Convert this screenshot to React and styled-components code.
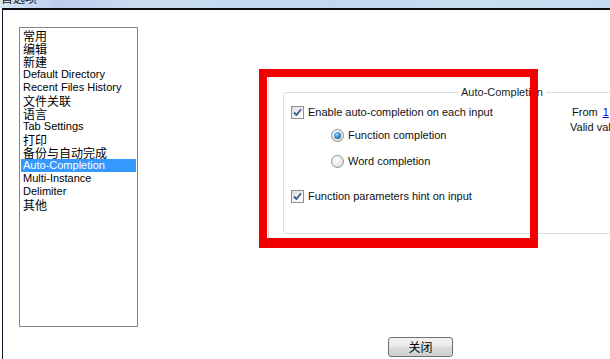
import React from 'react'
import { styled, createGlobalStyle } from 'styled-components'

const GlobalStyle = createGlobalStyle`
    html, body {
        margin: 0;
        padding: 0;
        background: #ffffff;
    }
    body {
        font-family: "Liberation Sans", "Noto Sans CJK SC", sans-serif;
        font-size: 11px;
        color: #000;
    }
`

const Page = styled.div`
    width: 610px;
    height: 359px;
    overflow: hidden;
    display: flex;
    flex-direction: column;
    background: #ffffff;
`

const TitleBar = styled.div`
    height: 8px;
    flex: none;
    overflow: hidden;
    background: linear-gradient(90deg, #d6e5f4 0%, #bccdee 10%, #c8dbf1 22%, #c2d8ef 55%, #c9ddf2 80%, #c4daf0 100%);
`

const TitleText = styled.div`
    margin-top: -9px;
    padding-left: 1px;
    font-family: "Noto Sans CJK SC", sans-serif;
    font-size: 12px;
    line-height: 14px;
    color: #1a1a1a;
`

const Dialog = styled.div`
    position: relative;
    flex: 1;
    margin-left: 2px;
    border-top: 2px solid #0b0b12;
    border-left: 1px solid #10182a;
    background: #ffffff;
    display: flex;
    flex-direction: column;
`

const MainRow = styled.div`
    display: flex;
    align-items: flex-start;
    padding: 17px 0 0 16px;
`

const ListBox = styled.div`
    box-sizing: border-box;
    flex: none;
    width: 119px;
    height: 300px;
    border: 1px solid #848484;
    padding: 1px 1px;
    background: #fff;
`

const ListItem = styled.div`
    height: 13px;
    line-height: 13px;
    padding-left: 2px;
    white-space: nowrap;
    font-family: ${p => p.$cjk ? '"Noto Sans CJK SC", sans-serif' : '"Liberation Sans", sans-serif'};
    font-size: ${p => p.$cjk ? '12px' : '11px'};
    background: ${p => p.$selected ? '#3399ff' : 'transparent'};
    color: ${p => p.$selected ? '#ffffff' : '#000000'};
`

const Pane = styled.div`
    flex: 1;
    min-width: 0;
    height: 163px;
    margin: 50px 0 0 130px;
    padding: 9px 0 0 14px;
    border-left: 1px solid #d6d6d6;
    box-sizing: border-box;
`

const GroupBox = styled.fieldset`
    width: 420px;
    margin: 0;
    padding: 0 0 30px 0;
    border: 1px solid #d5dfe5;
    border-radius: 3px;
    min-width: 0;
`

const Legend = styled.legend`
    margin-left: 174px;
    padding: 0 3px;
    font-size: 11px;
    line-height: 13px;
    color: #1e1e1e;
`

const GroupContent = styled.div`
    display: flex;
    padding: 7px 0 0 7px;
`

const Options = styled.div`
    width: 279px;
    flex: none;
    display: flex;
    flex-direction: column;
`

const OptionRow = styled.label`
    display: flex;
    align-items: center;
    height: 13px;
    margin-top: ${p => p.$gap || 0}px;
    padding-left: ${p => p.$indent || 0}px;
    font-size: 11px;
    line-height: 13px;
    white-space: nowrap;
    color: #111;
`

const OptionText = styled.span`
    margin-left: 4px;
`

const CheckBox = styled.span`
    box-sizing: border-box;
    flex: none;
    width: 13px;
    height: 13px;
    border: 1px solid #8e8f8f;
    background: linear-gradient(135deg, #dcdcdc 0%, #f4f4f4 60%, #ffffff 100%);
    display: flex;
    align-items: center;
    justify-content: center;
`

const Radio = styled.span`
    box-sizing: border-box;
    flex: none;
    width: 13px;
    height: 13px;
    border-radius: 50%;
    border: 1px solid #8e8f8f;
    background: radial-gradient(circle at 35% 35%, #ffffff 0%, #e8e8e8 55%, #cfcfcf 100%);
    display: flex;
    align-items: center;
    justify-content: center;
`

const RadioDot = styled.span`
    width: 7px;
    height: 7px;
    border-radius: 50%;
    background: radial-gradient(circle at 40% 35%, #a8dcfb 0%, #3f8fd0 45%, #17507f 100%);
`

const Side = styled.div`
    display: flex;
    flex-direction: column;
    line-height: 15px;
    margin-top: -1px;
    white-space: nowrap;
    color: #111;
`

const FromLine = styled.div`
    padding-left: 2px;
`

const LinkNum = styled.span`
    margin-left: 5px;
    color: #0000cc;
    text-decoration: underline;
`

const Footer = styled.div`
    display: flex;
    padding: 10px 0 0 385px;
`

const Button = styled.button`
    box-sizing: border-box;
    width: 65px;
    height: 20px;
    padding: 0;
    border: 1px solid #707070;
    border-radius: 3px;
    background: linear-gradient(180deg, #f2f2f2 0%, #ebebeb 45%, #dddddd 50%, #cfcfcf 100%);
    font-family: "Noto Sans CJK SC", sans-serif;
    font-size: 12px;
    line-height: 16px;
    color: #000;
`

const Highlight = styled.div`
    position: absolute;
    left: 256px;
    top: 59px;
    width: 279px;
    height: 179px;
    box-sizing: border-box;
    border: 8px solid #f00000;
    border-bottom-width: 10px;
    pointer-events: none;
`

const Check = () => (
    <CheckBox>
        <svg width="9" height="9" viewBox="0 0 9 9">
            <path d="M1 4.5 L3.5 7 L8 1.2" fill="none" stroke="#3c5a8e" strokeWidth="1.8" strokeLinejoin="round" />
        </svg>
    </CheckBox>
)

const items = [
    { label: '常用', cjk: true },
    { label: '编辑', cjk: true },
    { label: '新建', cjk: true },
    { label: 'Default Directory' },
    { label: 'Recent Files History' },
    { label: '文件关联', cjk: true },
    { label: '语言', cjk: true },
    { label: 'Tab Settings' },
    { label: '打印', cjk: true },
    { label: '备份与自动完成', cjk: true },
    { label: 'Auto-Completion', selected: true },
    { label: 'Multi-Instance' },
    { label: 'Delimiter' },
    { label: '其他', cjk: true },
]

const App = () => {
    return (
        <Page>
            <GlobalStyle />
            <TitleBar>
                <TitleText>首选项</TitleText>
            </TitleBar>
            <Dialog>
                <MainRow>
                    <ListBox>
                        {items.map(it => (
                            <ListItem key={it.label} $cjk={it.cjk} $selected={it.selected}>
                                {it.label}
                            </ListItem>
                        ))}
                    </ListBox>
                    <Pane>
                        <GroupBox>
                            <Legend>Auto-Completion</Legend>
                            <GroupContent>
                                <Options>
                                    <OptionRow>
                                        <Check />
                                        <OptionText>Enable auto-completion on each input</OptionText>
                                    </OptionRow>
                                    <OptionRow $indent={40} $gap={10}>
                                        <Radio><RadioDot /></Radio>
                                        <OptionText>Function completion</OptionText>
                                    </OptionRow>
                                    <OptionRow $indent={40} $gap={13}>
                                        <Radio />
                                        <OptionText>Word completion</OptionText>
                                    </OptionRow>
                                    <OptionRow $gap={22}>
                                        <Check />
                                        <OptionText>Function parameters hint on input</OptionText>
                                    </OptionRow>
                                </Options>
                                <Side>
                                    <FromLine>From<LinkNum>1</LinkNum></FromLine>
                                    <div>Valid values</div>
                                </Side>
                            </GroupContent>
                        </GroupBox>
                    </Pane>
                </MainRow>
                <Footer>
                    <Button>关闭</Button>
                </Footer>
                <Highlight />
            </Dialog>
        </Page>
    )
}

export default App
